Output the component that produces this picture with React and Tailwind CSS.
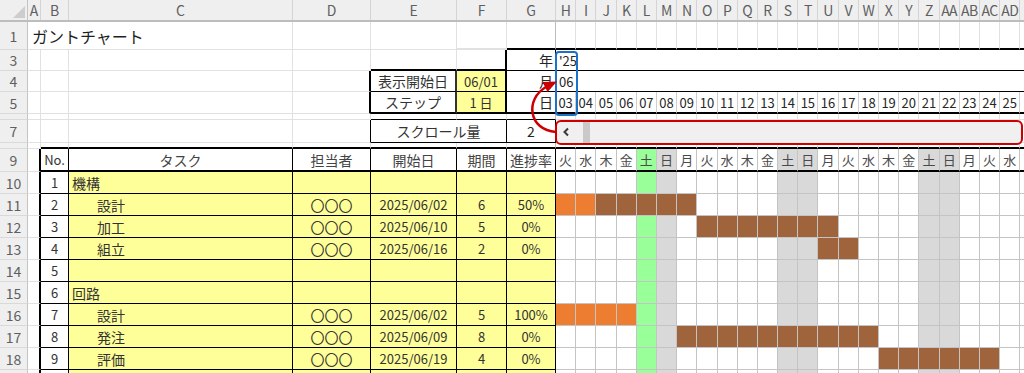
import React from 'react';

const days = ['03','04','05','06','07','08','09','10','11','12','13','14','15','16','17','18','19','20','21','22','23','24','25'];
const dows = ['火','水','木','金','土','日','月','火','水','木','金','土','日','月','火','水','木','金','土','日','月','火','水'];
const letters = ['H','I','J','K','L','M','N','O','P','Q','R','S','T','U','V','W','X','Y','Z','AA','AB','AC','AD'];

const colBg = (i) =>
  i === 4 ? 'bg-[#99ff99]' : i === 5 || i === 11 || i === 12 || i === 18 || i === 19 ? 'bg-[#d9d9d9]' : 'bg-white';

const tasks = [
  { n: '1', t: '機構', lvl: 0 },
  { n: '2', t: '設計', lvl: 1, p: '〇〇〇', d: '2025/06/02', len: '6', r: '50%', o: [0, 1], b: [2, 6] },
  { n: '3', t: '加工', lvl: 1, p: '〇〇〇', d: '2025/06/10', len: '5', r: '0%', b: [7, 13] },
  { n: '4', t: '組立', lvl: 1, p: '〇〇〇', d: '2025/06/16', len: '2', r: '0%', b: [13, 14] },
  { n: '5', t: '', lvl: 0 },
  { n: '6', t: '回路', lvl: 0 },
  { n: '7', t: '設計', lvl: 1, p: '〇〇〇', d: '2025/06/02', len: '5', r: '100%', o: [0, 3] },
  { n: '8', t: '発注', lvl: 1, p: '〇〇〇', d: '2025/06/09', len: '8', r: '0%', b: [6, 15] },
  { n: '9', t: '評価', lvl: 1, p: '〇〇〇', d: '2025/06/19', len: '4', r: '0%', b: [16, 21] },
  { n: '', t: '', lvl: 0, hideRow: true },
];

const barBg = (task, i) => {
  if (task.o && i >= task.o[0] && i <= task.o[1]) return 'bg-[#ed7d31]';
  if (task.b && i >= task.b[0] && i <= task.b[1]) return 'bg-[#a0643c]';
  return colBg(i);
};

const GRID = 'border-r border-b border-[#e1e1e1]';

const Cell = ({ className = '', children }) => (
  <div className={'shrink-0 h-full flex items-center overflow-hidden whitespace-nowrap leading-none ' + className}>
    {children}
  </div>
);

const RH = ({ n }) => (
  <Cell className="w-[28px] justify-center bg-[#efefef] border-r border-r-[#c4c4c4] border-b border-b-[#d9d9d9] text-[14px] text-[#5f5f5f]">
    {n}
  </Cell>
);

const GanttGrid = ({ cls = GRID }) => (
  <>
    {days.map((d, i) => (
      <Cell key={i} className={'w-[20.2px] ' + cls} />
    ))}
    <Cell className={'w-[20.2px] ' + cls} />
  </>
);

export default function App() {
  return (
    <div className="relative w-[1024px] h-[373px] overflow-hidden bg-white text-[#262626] font-['Noto_Sans_CJK_JP',sans-serif]">
      {/* column header */}
      <div className="flex h-[22px] bg-[#efefef] border-b-2 border-b-[#bdbdbd]">
        <Cell className="w-[28px] border-r border-r-[#c4c4c4] relative">
          <svg width="28" height="20" className="absolute left-0 top-0">
            <polygon points="25,6 25,18 13,18" fill="#cdcdcd" />
          </svg>
        </Cell>
        {[
          ['A', 'w-[13px]'],
          ['B', 'w-[28px]'],
          ['C', 'w-[224px]'],
          ['D', 'w-[78px]'],
          ['E', 'w-[86px]'],
          ['F', 'w-[50px]'],
          ['G', 'w-[49px]'],
        ].map(([l, w]) => (
          <Cell key={l} className={w + ' justify-center border-r border-r-[#d4d4d4] text-[14px] text-[#5f5f5f]'}>
            {l}
          </Cell>
        ))}
        {letters.map((l) => (
          <Cell key={l} className="w-[20.2px] justify-center border-r border-r-[#d4d4d4] text-[14px] tracking-[-0.5px] text-[#5f5f5f]">
            {l}
          </Cell>
        ))}
        <Cell className="w-[20.2px] border-r border-r-[#d4d4d4]" />
      </div>

      {/* row 1 */}
      <div className="flex h-[28px]">
        <RH n="1" />
        <Cell className="w-[265px] pl-[4px] text-[16px] text-[#1f1f1f] border-r border-b border-[#e1e1e1]">ガントチャート</Cell>
        <Cell className={'w-[78px] ' + GRID} />
        <Cell className={'w-[86px] ' + GRID} />
        <Cell className={'w-[50px] border-r border-r-[#e1e1e1] border-b-2 border-b-[#e1e1e1]'} />
        <Cell className="w-[49px] border-r border-r-[#bfbfbf] border-b-2 border-b-black" />
        <GanttGrid cls="border-r border-r-[#e1e1e1] border-b-2 border-b-black" />
      </div>

      {/* row 3 */}
      <div className="flex h-[21px]">
        <RH n="3" />
        <Cell className={'w-[13px] ' + GRID} />
        <Cell className={'w-[28px] ' + GRID} />
        <Cell className={'w-[224px] ' + GRID} />
        <Cell className={'w-[78px] ' + GRID} />
        <Cell className="w-[86px] border-r border-r-[#e1e1e1] border-b-2 border-b-black" />
        <Cell className="w-[50px] border-r-2 border-r-black border-b-2 border-b-black" />
        <Cell className="w-[49px] justify-end pr-[2px] text-[14px] border-r border-r-black border-b border-b-black">年</Cell>
        <Cell className="w-[20.2px] pl-[3px] text-[13px] border-b border-b-black">'25</Cell>
        <Cell className="w-[480px] border-b border-b-black" />
      </div>

      {/* row 4 */}
      <div className="flex h-[21px]">
        <RH n="4" />
        <Cell className={'w-[13px] ' + GRID} />
        <Cell className={'w-[28px] ' + GRID} />
        <Cell className={'w-[224px] ' + GRID} />
        <Cell className="w-[78px] border-r-2 border-r-black border-b border-b-[#e1e1e1]" />
        <Cell className="w-[86px] justify-center text-[14px] text-[#333] border-r-2 border-r-[#333] border-b border-b-black">表示開始日</Cell>
        <Cell className="w-[50px] justify-center text-[13px] text-[#333] bg-[#ffff99] border-r-2 border-r-black border-b border-b-black">06/01</Cell>
        <Cell className="w-[49px] justify-end pr-[2px] text-[14px] border-r border-r-black border-b border-b-black">月</Cell>
        <Cell className="w-[20.2px] pl-[3px] text-[13px] border-b border-b-black">06</Cell>
        <Cell className="w-[480px] border-b border-b-black" />
      </div>

      {/* row 5 */}
      <div className="flex h-[22px]">
        <RH n="5" />
        <Cell className={'w-[13px] ' + GRID} />
        <Cell className={'w-[28px] ' + GRID} />
        <Cell className={'w-[224px] ' + GRID} />
        <Cell className="w-[78px] border-r-2 border-r-black border-b border-b-[#e1e1e1]" />
        <Cell className="w-[86px] justify-center text-[14px] text-[#333] border-r-2 border-r-[#333] border-b-2 border-b-black">ステップ</Cell>
        <Cell className="w-[50px] justify-center text-[13px] text-[#333] bg-[#ffff99] border-r-2 border-r-black border-b-2 border-b-black">1 日</Cell>
        <Cell className="w-[49px] justify-end pr-[2px] text-[14px] border-r border-r-black border-b-2 border-b-black">日</Cell>
        {days.map((d) => (
          <Cell key={d} className="w-[20.2px] justify-center text-[13px] border-r border-r-[#cfcfcf] border-b-2 border-b-black">
            {d}
          </Cell>
        ))}
        <Cell className="w-[20.2px] border-r border-r-[#cfcfcf] border-b-2 border-b-black" />
      </div>

      {/* row 6 */}
      <div className="flex h-[6px]">
        <RH n="" />
        <Cell className={'w-[13px] ' + GRID} />
        <Cell className={'w-[28px] ' + GRID} />
        <Cell className={'w-[224px] ' + GRID} />
        <Cell className={'w-[78px] ' + GRID} />
        <Cell className="w-[86px] border-r border-r-[#e1e1e1] border-b border-b-black" />
        <Cell className="w-[50px] border-r border-r-[#e1e1e1] border-b border-b-black" />
        <Cell className="w-[49px] border-r border-r-[#bfbfbf] border-b border-b-black" />
        <GanttGrid />
      </div>

      {/* row 7 */}
      <div className="flex h-[23px]">
        <RH n="7" />
        <Cell className={'w-[13px] ' + GRID} />
        <Cell className={'w-[28px] ' + GRID} />
        <Cell className={'w-[224px] ' + GRID} />
        <Cell className="w-[78px] border-r border-r-black border-b border-b-[#e1e1e1]" />
        <Cell className="w-[136px] justify-center text-[14px] text-[#333] border-r border-r-black border-b border-b-black">スクロール量</Cell>
        <Cell className="w-[49px] justify-center text-[14px] border-r border-r-black border-b border-b-black">2</Cell>
        <div className="shrink-0 w-[464.6px] h-full bg-[#f0f0f0] flex items-center">
          <div className="w-[20px] h-full flex items-center justify-center">
            <svg width="8" height="10" viewBox="0 0 8 10">
              <path d="M6 1.5 L2.5 5 L6 8.5" fill="none" stroke="#3a3a3a" strokeWidth="2" />
            </svg>
          </div>
          <div className="ml-[7px] w-[7px] h-full bg-[#c9c9c9]" />
        </div>
        <Cell className={'w-[20.2px] ' + GRID} />
      </div>

      {/* row 8 */}
      <div className="flex h-[6px]">
        <RH n="" />
        <Cell className={'w-[13px] ' + GRID} />
        <Cell className="w-[28px] border-r border-r-[#e1e1e1] border-b-2 border-b-black" />
        <Cell className="w-[224px] border-r border-r-[#e1e1e1] border-b-2 border-b-black" />
        <Cell className="w-[78px] border-r border-r-[#e1e1e1] border-b-2 border-b-black" />
        <Cell className="w-[86px] border-r border-r-[#e1e1e1] border-b-2 border-b-black" />
        <Cell className="w-[50px] border-r border-r-[#e1e1e1] border-b-2 border-b-black" />
        <Cell className="w-[49px] border-r border-r-[#bfbfbf] border-b-2 border-b-black" />
        <GanttGrid cls="border-r border-r-[#e1e1e1] border-b-2 border-b-black" />
      </div>

      {/* row 9 header */}
      <div className="flex h-[23px]">
        <RH n="9" />
        <Cell className="w-[13px] border-r-2 border-r-black border-b border-b-[#e1e1e1]" />
        <Cell className="w-[28px] justify-center text-[13px] text-[#333] border-r border-r-black border-b-2 border-b-black">No.</Cell>
        <Cell className="w-[224px] justify-center text-[14px] text-[#444] border-r border-r-black border-b-2 border-b-black">タスク</Cell>
        <Cell className="w-[78px] justify-center text-[14px] text-[#444] border-r border-r-black border-b-2 border-b-black">担当者</Cell>
        <Cell className="w-[86px] justify-center text-[14px] text-[#444] border-r border-r-black border-b-2 border-b-black">開始日</Cell>
        <Cell className="w-[50px] justify-center text-[14px] text-[#444] border-r border-r-black border-b-2 border-b-black">期間</Cell>
        <Cell className="w-[49px] justify-center text-[14px] text-[#444] border-r border-r-black border-b-2 border-b-black">進捗率</Cell>
        {dows.map((w, i) => (
          <Cell key={i} className={'w-[20.2px] justify-center text-[13px] text-[#4a4a4a] border-r border-r-[#c4c4c4] border-b-2 border-b-black ' + colBg(i)}>
            {w}
          </Cell>
        ))}
        <Cell className="w-[20.2px] border-r border-r-[#c4c4c4] border-b-2 border-b-black" />
      </div>

      {/* task rows */}
      {tasks.map((task, ri) => (
        <div key={ri} className="flex h-[22px]">
          <RH n={task.hideRow ? '' : String(10 + ri)} />
          <Cell className="w-[13px] border-r-2 border-r-black border-b border-b-[#e1e1e1]" />
          <Cell className="w-[28px] justify-center bg-white text-[13px] text-[#333] border-r border-r-black border-b border-b-black">{task.n}</Cell>
          <Cell className={'w-[224px] bg-[#ffff99] text-[14px] text-[#333] border-r border-r-black border-b border-b-black ' + (task.lvl ? 'pl-[28px]' : 'pl-[3px]')}>
            {task.t}
          </Cell>
          <Cell className="w-[78px] justify-center bg-[#ffff99] text-[14px] text-[#333] border-r border-r-black border-b border-b-black">{task.p}</Cell>
          <Cell className="w-[86px] justify-center bg-[#ffff99] text-[13px] text-[#333] border-r border-r-black border-b border-b-black">{task.d}</Cell>
          <Cell className="w-[50px] justify-center bg-[#ffff99] text-[13px] text-[#333] border-r border-r-black border-b border-b-black">{task.len}</Cell>
          <Cell className="w-[49px] justify-center bg-[#ffff99] text-[13px] text-[#333] border-r border-r-black border-b border-b-black">{task.r}</Cell>
          {days.map((d, i) => (
            <Cell key={i} className={'w-[20.2px] border-r border-b border-[#c4c4c4] ' + barBg(task, i)} />
          ))}
          <Cell className="w-[20.2px] bg-white border-r border-b border-[#c4c4c4]" />
        </div>
      ))}

      {/* overlays */}
      <div className="absolute left-[555px] top-[51px] w-[23px] h-[65px] border-2 border-[#1a73c8] rounded-[4px] pointer-events-none" />
      <div className="absolute left-[555px] top-[120px] w-[468px] h-[25px] border-2 border-[#cc0000] rounded-[6px] pointer-events-none" />
      <svg className="absolute left-0 top-0 pointer-events-none" width="1024" height="373">
        <path d="M556 132 C528 130, 525 99, 546 87" fill="none" stroke="#cc0000" strokeWidth="2.5" />
        <polygon points="557,81.5 542.5,82 547.5,92" fill="#cc0000" />
      </svg>
    </div>
  );
}
